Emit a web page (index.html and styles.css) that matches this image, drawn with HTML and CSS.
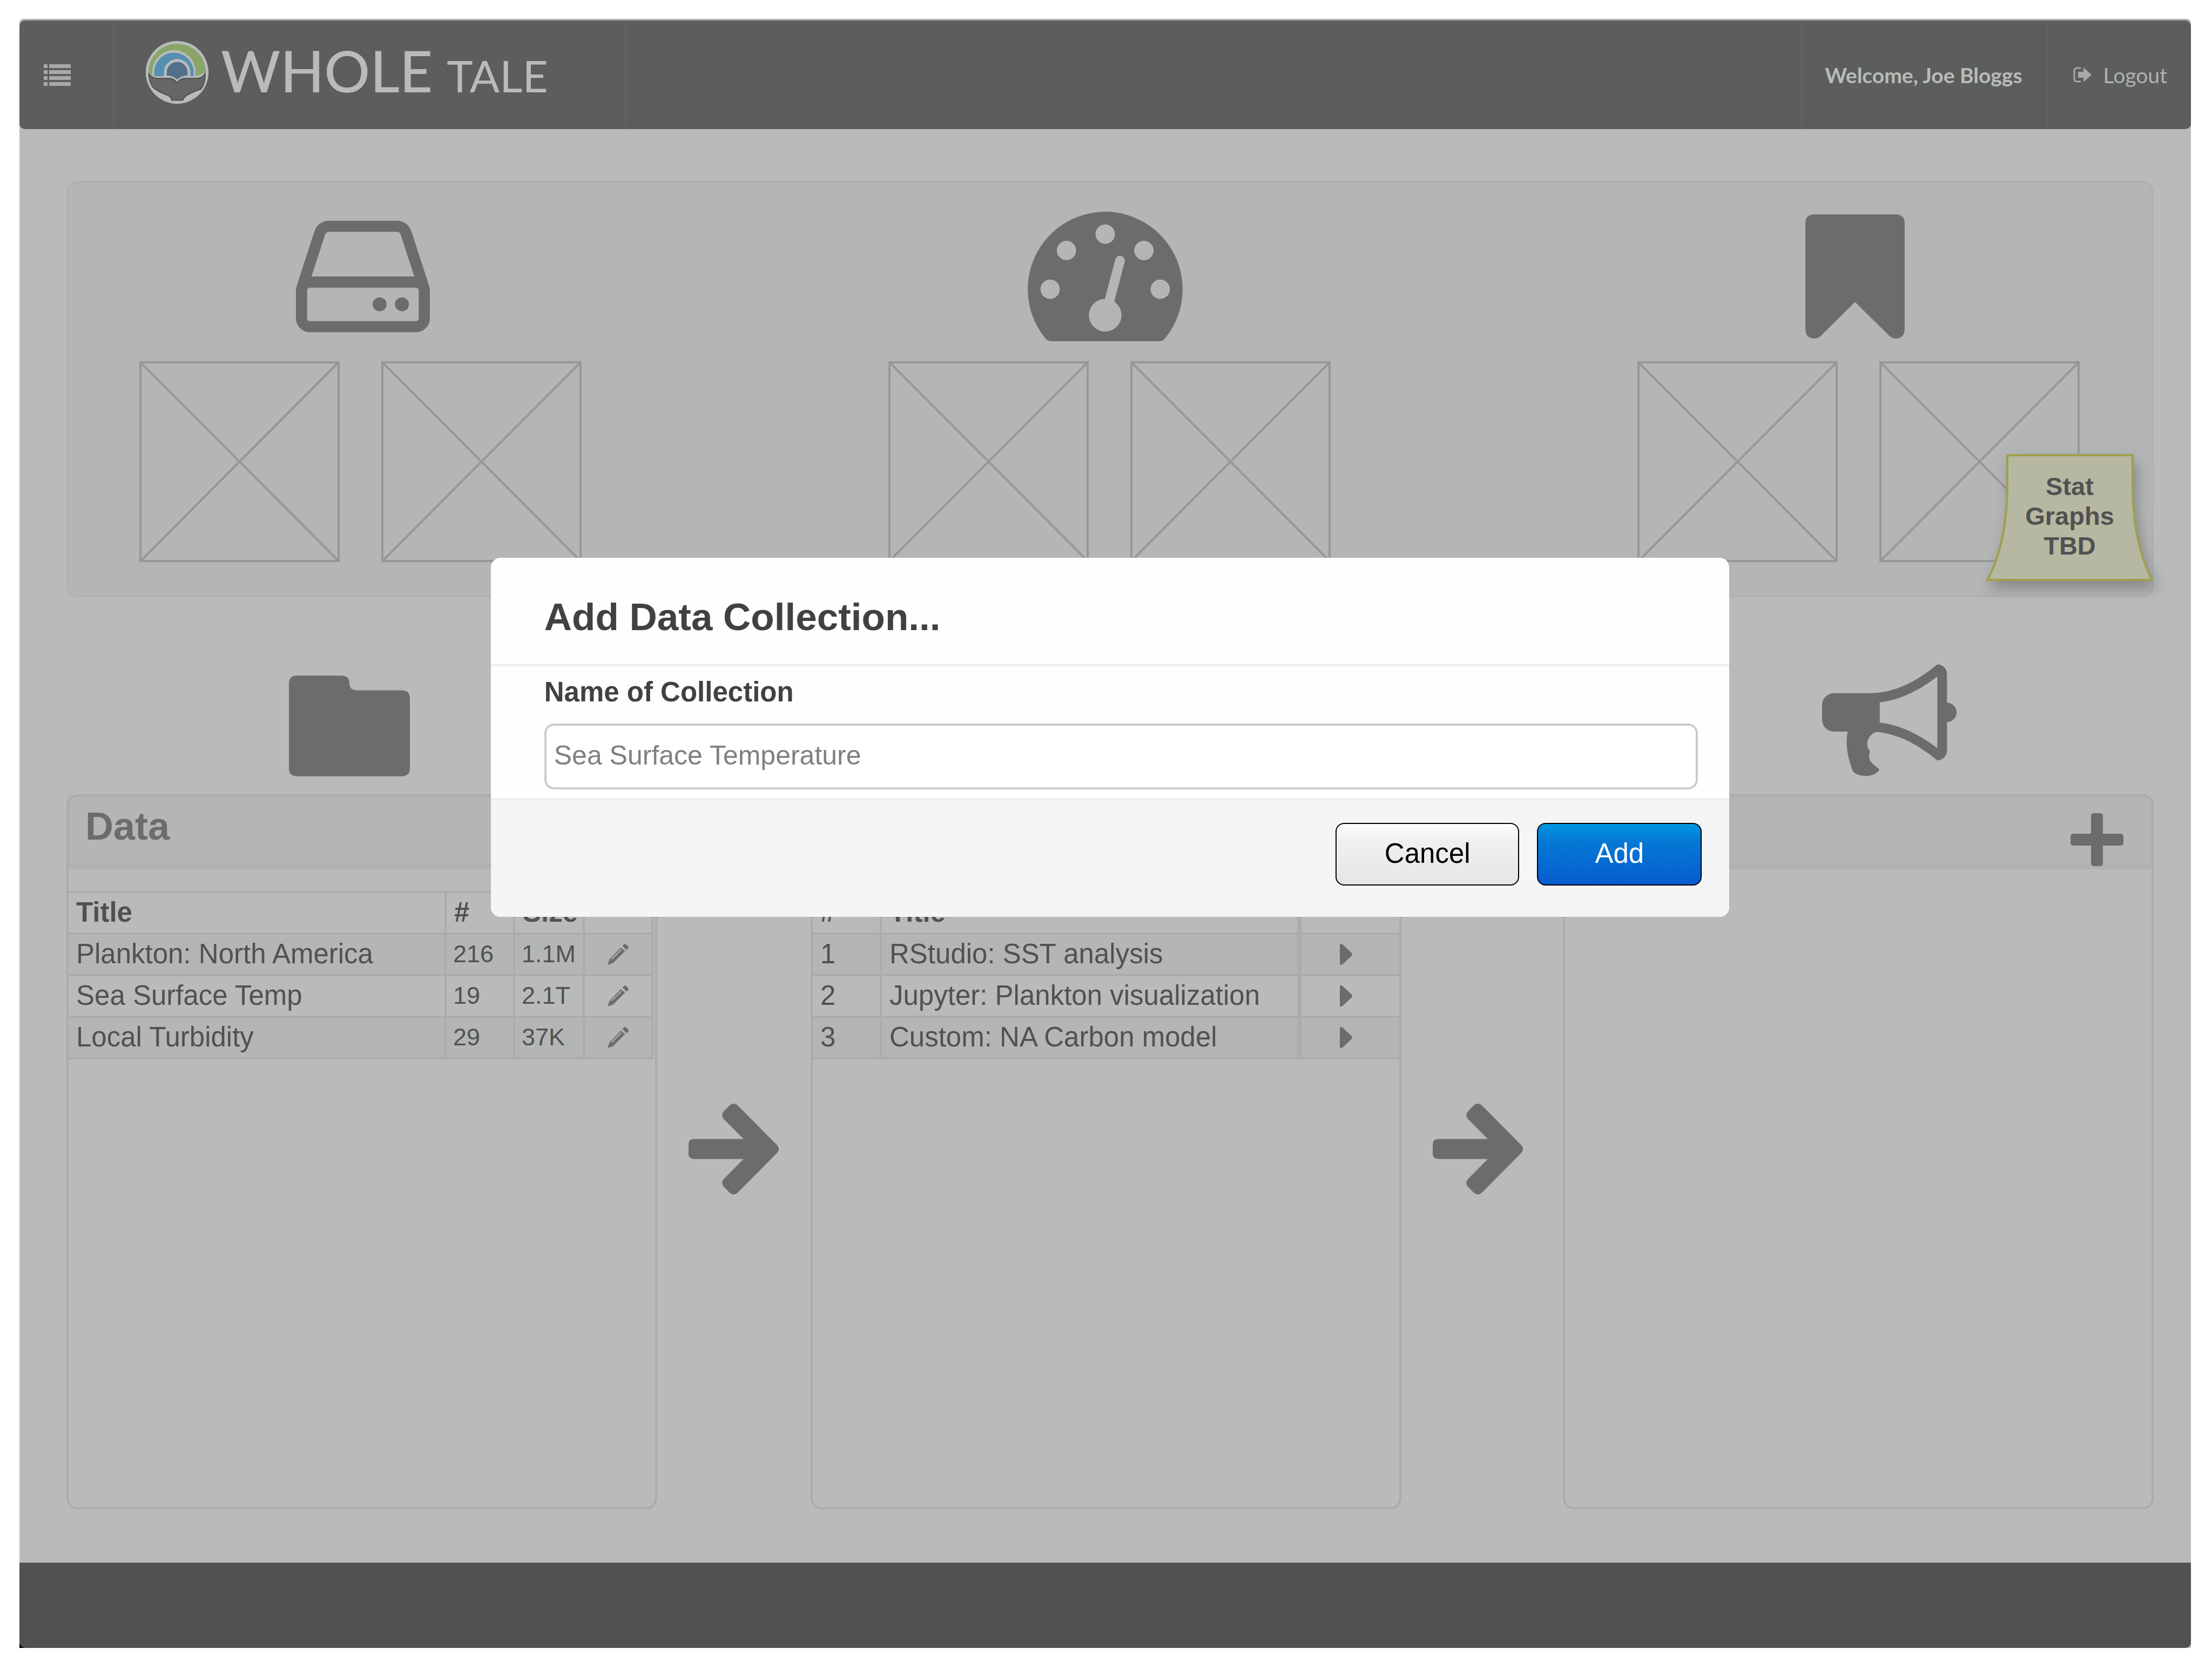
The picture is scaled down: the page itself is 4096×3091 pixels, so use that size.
FILE: index.html
```html
<!DOCTYPE html>
<html lang="en">
<head>
<meta charset="utf-8">
<title>Whole Tale</title>
<link rel="stylesheet" href="styles.css">
</head>
<body>
<div class="frame">
  <header class="topbar">
    <button class="topbar-cell menu-toggle" type="button" aria-label="Menu">
      <svg class="icon-list" viewBox="0 0 50 40" aria-hidden="true"><path d="M0 0h7v7H0zM10 0h40v7H10zM0 11h7v7H0zM10 11h40v7H10zM0 22h7v7H0zM10 22h40v7H10zM0 33h7v7H0zM10 33h40v7H10z"/></svg>
    </button>
    <a class="topbar-cell brand" href="#">
      <svg class="brand-mark" viewBox="50 52 376 384" aria-hidden="true">
        <circle cx="238" cy="244" r="186" fill="#b9bbba"/>
        <path d="M68 250V244A170 170 0 0 1 408 244L345 268H68Z" fill="#8aa56a"/>
        <path d="M91 268V240A128 128 0 0 1 347 240V268Z" fill="#b9bbba"/>
        <path d="M102 268V244A117 117 0 0 1 336 244V268Z" fill="#5590b0"/>
        <path d="M160 272V243A78 78 0 0 1 316 243V272Z" fill="#b9bbba"/>
        <path d="M176 262V244A62 62 0 0 1 300 244V262Q262 264 238 286Q216 264 176 262Z" fill="#527089"/>
        <path d="M64 240L98 268H190Q225 268 238 294Q250 268 285 268H372L410 240V262L360 285H110L66 262Z" fill="#b9bbba"/>
        <path d="M70 252Q90 278 118 280H196Q222 284 238 305Q252 284 280 280H358Q388 276 404 252Q406 308 378 344Q345 352 310 372Q280 386 272 409H206Q204 386 172 376Q130 362 96 334Q72 304 70 252Z" fill="#656665" stroke="#4b4d4c" stroke-width="6"/>
      </svg>
      <span class="wordmark"><span class="word-whole">WHOLE</span><span class="word-tale">TALE</span></span>
    </a>
    <span class="topbar-cell welcome">Welcome, Joe Bloggs</span>
    <a class="topbar-cell logout" href="#">
      <svg class="icon-logout" viewBox="0 0 34 29" aria-hidden="true"><path d="M14 2H7Q2 2 2 7V22Q2 27 7 27H14" fill="none" stroke="#a8aaa9" stroke-width="3"/><path d="M9 9H19V1L34 14.500L19 28V20H9Z" fill="#a8aaa9"/></svg>
      Logout
    </a>
  </header>

  <main class="workspace">
    <section class="stats">
      <div class="columns stat-icons">
        <svg class="icon-hdd" viewBox="128 256 1536 1280" aria-hidden="true"><path d="M1168 1216q0 33-23.500 56.500t-56.500 23.500-56.500-23.500-23.500-56.500 23.500-56.500 56.500-23.500 56.500 23.500 23.500 56.500zm256 0q0 33-23.500 56.500t-56.500 23.500-56.500-23.500-23.500-56.500 23.500-56.500 56.500-23.500 56.500 23.500 23.500 56.500zm112 160v-320q0-13-9.500-22.500t-22.500-9.500h-1216q-13 0-22.500 9.500t-9.500 22.500v320q0 13 9.500 22.500t22.500 9.500h1216q13 0 22.500-9.500t9.500-22.500zm-1230-480h1180l-157-482q-4-13-16-21.500t-26-8.500h-782q-14 0-26 8.500t-16 21.500zm1358 160v320q0 66-47 113t-113 47h-1216q-66 0-113-47t-47-113v-320q0-25 16-75l197-606q17-53 63-86t101-33h782q55 0 101 33t63 86l197 606q16 50 16 75z"/></svg>
        <svg class="icon-gauge" viewBox="0 0 304 254" aria-hidden="true"><path d="M152 0A152 152 0 0 1 268 250Q264 254 259 254H45Q40 254 36 250A152 152 0 0 1 152 0Z"/><g fill="#b4b6b5"><circle cx="152" cy="44" r="19"/><circle cx="76" cy="76" r="19"/><circle cx="228" cy="76" r="19"/><circle cx="44" cy="152" r="19"/><circle cx="260" cy="152" r="19"/><circle cx="152" cy="203" r="32"/></g><path d="M159 180L181 96" stroke="#b4b6b5" stroke-width="19" stroke-linecap="round"/></svg>
        <svg class="icon-bookmark" viewBox="0 0 195 244" aria-hidden="true"><path d="M18 0H177Q195 0 195 18V225Q195 244 177 244Q170 244 164 238L97.500 172L31 238Q25 244 18 244Q0 244 0 225V18Q0 0 18 0Z"/></svg>
      </div>
      <div class="stat-graphs">
        <div class="graph-pair">
          <svg class="graph" viewBox="0 0 371 372"><path d="M2 2H369V370H2ZL369 370M369 2L2 370"/></svg>
          <svg class="graph" viewBox="0 0 371 372"><path d="M2 2H369V370H2ZL369 370M369 2L2 370"/></svg>
        </div>
        <div class="graph-pair">
          <svg class="graph" viewBox="0 0 371 372"><path d="M2 2H369V370H2ZL369 370M369 2L2 370"/></svg>
          <svg class="graph" viewBox="0 0 371 372"><path d="M2 2H369V370H2ZL369 370M369 2L2 370"/></svg>
        </div>
        <div class="graph-pair">
          <svg class="graph" viewBox="0 0 371 372"><path d="M2 2H369V370H2ZL369 370M369 2L2 370"/></svg>
          <svg class="graph" viewBox="0 0 371 372"><path d="M2 2H369V370H2ZL369 370M369 2L2 370"/></svg>
        </div>
      </div>
      <div class="note">
        <svg class="note-paper" viewBox="0 0 311 235" aria-hidden="true"><path d="M40 2H272V55C272 125 283 185 308 233H3C29 185 40 125 40 55Z"/></svg>
        <p class="note-text">Stat<br>Graphs<br>TBD</p>
      </div>
    </section>

    <div class="section-icons">
      <svg class="icon-folder" viewBox="0 0 238 198" aria-hidden="true"><path d="M16 0H103Q119 0 119 15Q119 29 134 29H222Q238 29 238 45V182Q238 198 222 198H16Q0 198 0 182V16Q0 0 16 0Z"/></svg>
      <svg class="icon-bullhorn" viewBox="0 128 1792 1490" aria-hidden="true"><path d="M1664 640q53 0 90.500 37.500t37.500 90.500-37.500 90.500-90.500 37.500v384q0 52-38 90t-90 38q-417-347-812-380-58 19-91 66t-31 100.500 40 92.500C618 1335 622 1400 660 1438C692 1472 738 1500 764 1527C736 1590 655 1617 581 1615C495 1612 425 1586 406 1541C345 1375 305 1195 342 1024H160q-66 0-113-47t-47-113v-192q0-66 47-113t113-47h480q435 0 896-384 52 0 90 38t38 90v384zm-128 604v-954q-394 302-768 343v270q377 42 768 341z"/></svg>
    </div>

    <div class="columns panels">
      <section class="panel">
        <header class="panel-head"><h2 class="panel-title">Data</h2></header>
        <table class="grid data-grid">
          <colgroup><col><col class="col-count"><col class="col-size"><col class="col-edit"></colgroup>
          <thead><tr><th>Title</th><th>#</th><th>Size</th><th></th></tr></thead>
          <tbody>
            <tr><td>Plankton: North America</td><td class="small">216</td><td class="small">1.1M</td><td class="action"><button class="icon-button" type="button" aria-label="Edit"><svg class="icon-pencil" viewBox="0 0 41 41"><path d="M0 41L4 30L26 7L34 14L11 37ZM29 4L32 1Q34 -1 36 1L40 5Q42 7 40 9L37 12Z"/><path d="M8 30L27 11" class="pencil-shine"/></svg></button></td></tr>
            <tr><td>Sea Surface Temp</td><td class="small">19</td><td class="small">2.1T</td><td class="action"><button class="icon-button" type="button" aria-label="Edit"><svg class="icon-pencil" viewBox="0 0 41 41"><path d="M0 41L4 30L26 7L34 14L11 37ZM29 4L32 1Q34 -1 36 1L40 5Q42 7 40 9L37 12Z"/><path d="M8 30L27 11" class="pencil-shine"/></svg></button></td></tr>
            <tr><td>Local Turbidity</td><td class="small">29</td><td class="small">37K</td><td class="action"><button class="icon-button" type="button" aria-label="Edit"><svg class="icon-pencil" viewBox="0 0 41 41"><path d="M0 41L4 30L26 7L34 14L11 37ZM29 4L32 1Q34 -1 36 1L40 5Q42 7 40 9L37 12Z"/><path d="M8 30L27 11" class="pencil-shine"/></svg></button></td></tr>
          </tbody>
        </table>
      </section>

      <div class="flow"><svg class="icon-arrow" viewBox="0 0 177 178" aria-hidden="true"><path d="M11 69.500H108L70 31Q62 23 70 14L80 4Q88.500 -4 97 4L173 80.500Q181 89 173 97.500L97 174Q88.500 182 80 174L70 164Q62 155 70 147L108 108.500H11Q0 108.500 0 98V80Q0 69.500 11 69.500Z"/></svg></div>

      <section class="panel">
        <header class="panel-head"></header>
        <table class="grid tale-grid">
          <colgroup><col class="col-index"><col><col class="col-run"></colgroup>
          <thead><tr><th>#</th><th>Title</th><th></th></tr></thead>
          <tbody>
            <tr><td>1</td><td>RStudio: SST analysis</td><td class="action"><button class="icon-button" type="button" aria-label="Run"><svg class="icon-play" viewBox="0 0 23 39"><path d="M0 3Q0 -2 5 1L22 17Q24 19.500 22 22L5 38Q0 41 0 36Z"/></svg></button></td></tr>
            <tr><td>2</td><td>Jupyter: Plankton visualization</td><td class="action"><button class="icon-button" type="button" aria-label="Run"><svg class="icon-play" viewBox="0 0 23 39"><path d="M0 3Q0 -2 5 1L22 17Q24 19.500 22 22L5 38Q0 41 0 36Z"/></svg></button></td></tr>
            <tr><td>3</td><td>Custom: NA Carbon model</td><td class="action"><button class="icon-button" type="button" aria-label="Run"><svg class="icon-play" viewBox="0 0 23 39"><path d="M0 3Q0 -2 5 1L22 17Q24 19.500 22 22L5 38Q0 41 0 36Z"/></svg></button></td></tr>
          </tbody>
        </table>
      </section>

      <div class="flow"><svg class="icon-arrow" viewBox="0 0 177 178" aria-hidden="true"><path d="M11 69.500H108L70 31Q62 23 70 14L80 4Q88.500 -4 97 4L173 80.500Q181 89 173 97.500L97 174Q88.500 182 80 174L70 164Q62 155 70 147L108 108.500H11Q0 108.500 0 98V80Q0 69.500 11 69.500Z"/></svg></div>

      <section class="panel">
        <header class="panel-head">
          <button class="icon-button add-button" type="button" aria-label="Add"><svg class="icon-plus" viewBox="0 0 98 98"><rect x="38" width="22" height="98" rx="5"/><rect y="38" width="98" height="22" rx="5"/></svg></button>
        </header>
      </section>
    </div>
  </main>

  <footer class="site-footer"><div class="footer-bar"></div></footer>
</div>

<div class="overlay">
  <form class="modal" role="dialog" aria-labelledby="modal-title">
    <h1 class="modal-title" id="modal-title">Add Data Collection...</h1>
    <div class="modal-body">
      <label class="field-label" for="collection-name">Name of Collection</label>
      <input class="field-input" id="collection-name" type="text" value="Sea Surface Temperature">
    </div>
    <div class="modal-actions">
      <button class="btn btn-cancel" type="button">Cancel</button>
      <button class="btn btn-add" type="button">Add</button>
    </div>
  </form>
</div>
</body>
</html>
```
FILE: styles.css
```css
* { box-sizing: border-box; }

body {
  margin: 0;
  min-height: 100vh;
  display: flex;
  position: relative;
  background: #fff;
  color: #505251;
  font-family: "Liberation Sans", Arial, sans-serif;
  font-size: 51px;
}

h1, h2, p { margin: 0; }
svg { display: block; fill: #6b6d6c; }
a { color: inherit; text-decoration: none; }

.frame {
  flex: 1;
  display: flex;
  flex-direction: column;
  margin: 35px 39px 39px 36px;
  border-top: 3px solid #abadac;
  border-radius: 8px 8px 0 0;
  background: #b9bbba;
}

/* Top bar */
.topbar {
  display: flex;
  height: 201px;
  border-radius: 10px;
  background: #5c5e5d;
  color: #b0b2b1;
  font-family: Lato, sans-serif;
  font-size: 39px;
}
.topbar-cell { display: flex; align-items: center; }
.menu-toggle {
  width: 175px;
  padding: 0 0 0 45px;
  border: 0;
  border-right: 2px solid #626463;
  background: none;
}
.icon-list { width: 50px; height: 40px; fill: #a8aaa9; }
.brand {
  gap: 22px;
  width: 948px;
  padding: 0 0 9px 58px;
  border-right: 2px solid #626463;
  color: #b9bbba;
}
.brand-mark { width: 118px; height: 120px; }
.wordmark { display: flex; align-items: baseline; gap: 26px; line-height: 120px; }
.word-whole { font-size: 106px; font-weight: 500; }
.word-tale { font-size: 82px; font-weight: 400; }
.welcome {
  margin-left: auto;
  padding: 0 46px 0 42px;
  border-left: 2px solid #626463;
  color: #b9bbba;
  font-weight: 700;
}
.logout { gap: 22px; padding: 0 44px 0 46px; border-left: 2px solid #626463; }
.icon-logout { width: 34px; height: 29px; }

/* Workspace */
.workspace {
  flex: 1;
  display: flex;
  flex-direction: column;
  padding: 96px 69px 99px 87px;
}
.columns {
  display: grid;
  grid-template-columns: 1094fr 284fr 1094fr 299fr 1094fr;
}

.stats {
  position: relative;
  padding: 53px 0 61px;
  border: 4px solid #b0b2b1;
  border-radius: 20px;
  background: #b4b6b5;
}
.stat-icons { align-items: center; justify-items: center; padding-right: 4px; }
.icon-hdd { grid-column: 1; width: 248px; height: 208px; }
.icon-gauge { grid-column: 3; width: 287px; height: 240px; }
.icon-bookmark { grid-column: 5; width: 184px; height: 230px; }
.stat-graphs {
  display: flex;
  justify-content: space-between;
  padding: 37px 133px 0 131px;
}
.graph-pair { display: flex; gap: 77px; }
.graph { width: 371px; height: 372px; fill: none; stroke: #969897; stroke-width: 4px; }

.note {
  position: absolute;
  right: -4px;
  bottom: 26px;
  width: 311px;
  height: 235px;
  padding-top: 32px;
}
.note-paper {
  position: absolute;
  inset: 0;
  fill: #b7b8a2;
  stroke: #a09f4e;
  stroke-width: 4px;
  filter: drop-shadow(6px 14px 12px rgba(80, 82, 81, 0.45));
}
.note-text {
  position: relative;
  font-size: 47px;
  font-weight: 700;
  line-height: 55px;
  text-align: center;
}

.section-icons {
  display: flex;
  align-items: flex-end;
  justify-content: space-between;
  padding: 124px 365px 33px 412px;
}
.icon-folder { width: 224px; height: 187px; }
.icon-bullhorn { width: 249px; height: 208px; }

/* Panels */
.panels { flex: 1; }
.panel { border: 4px solid #abadac; border-radius: 20px; }
.panel-head {
  display: flex;
  align-items: flex-start;
  height: 135px;
  padding: 31px 48px 0 27px;
  border: 4px solid #b0b2b1;
  border-top-width: 0;
  border-bottom-width: 10px;
  border-radius: 16px 16px 0 0;
  background: #b4b6b5;
}
.panel-title { color: #6b6d6c; font-size: 72px; line-height: 48px; }
.icon-button { padding: 0; border: 0; background: none; }
.add-button { margin-left: auto; }
.icon-plus { width: 98px; height: 98px; }

.flow { display: flex; align-items: center; padding: 0 0 11px 58px; }
.icon-arrow { width: 167px; height: 168px; }

.grid {
  width: 100%;
  margin-top: 40px;
  border-collapse: collapse;
  table-layout: fixed;
}
.data-grid { width: calc(100% - 3px); border-right: 4px solid #abadac; }
.grid th, .grid td {
  height: 77px;
  padding: 0 0 2px 14px;
  border: 4px solid #abadac;
  line-height: 60px;
  text-align: left;
  white-space: nowrap;
}
.grid th:first-child, .grid td:first-child { border-left: 0; }
.grid tbody tr:nth-child(odd) { background: #b4b6b5; }
.grid .small { padding-left: 12px; font-size: 45px; }
.grid .action { padding: 0; }
.grid .icon-button { display: flex; margin: 0 auto; }
.col-count { width: 127px; }
.col-size { width: 129px; }
.col-edit { width: 127px; }
.col-index { width: 126px; }
.col-run { width: 185px; }
.tale-grid th:last-child, .tale-grid td:last-child { border-left-width: 8px; border-right: 0; }
.tale-grid .action { padding-right: 16px; }
.icon-pencil { width: 39px; height: 39px; }
.pencil-shine { stroke: #b4b6b5; stroke-width: 2px; }
.icon-play { width: 23px; height: 39px; }

.site-footer { background: linear-gradient(90deg, #000 50%, #b9bbba 50%); }
.footer-bar { height: 158px; border-radius: 0 0 10px 12px; background: #505251; }

/* Modal */
.overlay {
  position: absolute;
  inset: 0;
  display: flex;
  align-items: flex-start;
  justify-content: center;
  padding: 1033px 0 0 15px;
}
.modal {
  width: 56.2%;
  border-radius: 18px;
  overflow: hidden;
  background: #fdfefe;
  color: #414141;
}
.modal-title {
  padding: 70px 99px 47px;
  border-bottom: 4px solid #eeeeee;
  font-size: 71px;
  line-height: 80px;
}
.modal-body { padding: 18px 58px 16px 99px; }
.field-label { display: block; font-weight: 700; line-height: 60px; }
.field-input {
  display: block;
  width: 100%;
  height: 122px;
  margin-top: 28px;
  padding: 0 14px 4px;
  border: 4px solid #cccccc;
  border-radius: 18px;
  background: #fff;
  color: #808080;
  font: inherit;
  font-size: 50px;
}
.modal-actions {
  display: flex;
  justify-content: flex-end;
  gap: 33px;
  padding: 42px 51px 58px;
  border-top: 4px solid #eeeeee;
  background: #f5f5f5;
}
.btn {
  height: 116px;
  padding: 0 0 4px;
  border: 2px solid #000;
  border-radius: 16px;
  font: inherit;
}
.btn-cancel {
  width: 340px;
  background: linear-gradient(#ffffff, #f1f1f1 25%, #e5e5e5);
  color: #000;
}
.btn-add {
  width: 305px;
  background: linear-gradient(#0098df, #047bd6 25%, #085cce);
  color: #fff;
}
```
